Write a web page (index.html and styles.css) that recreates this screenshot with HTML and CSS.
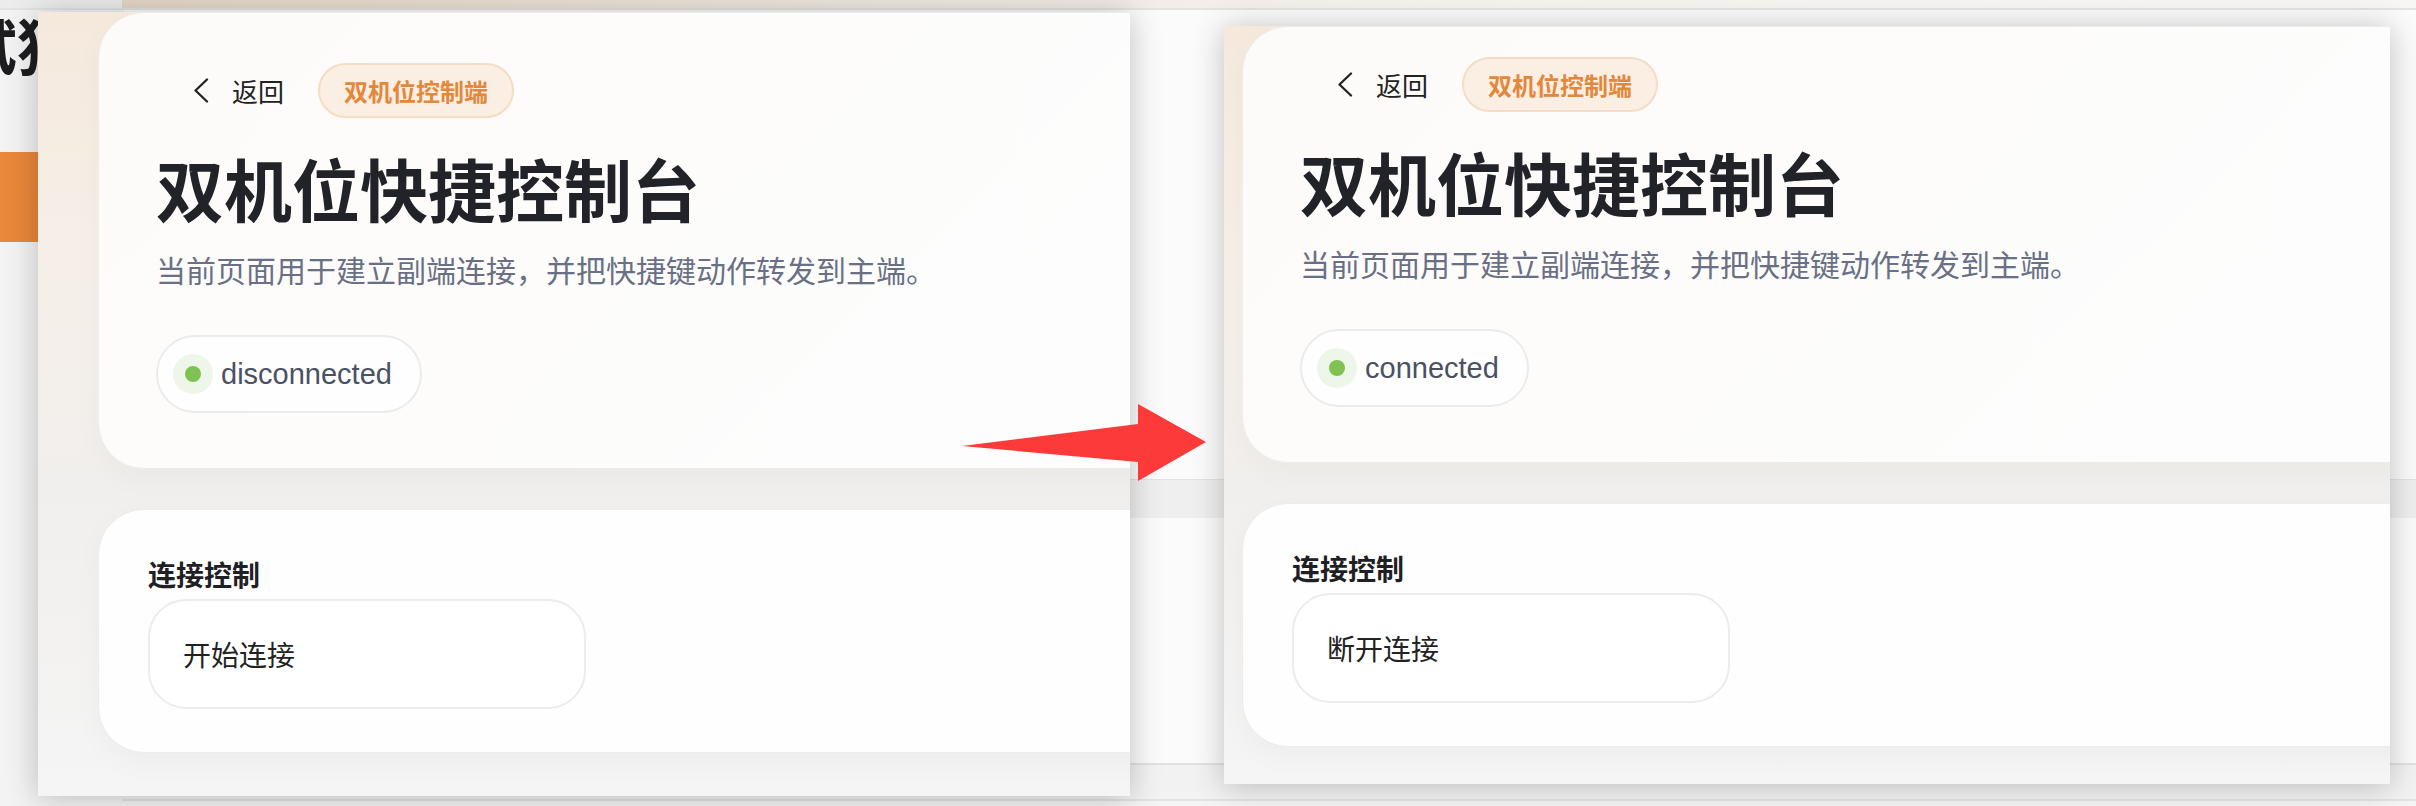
FILE: index.html
```html
<!DOCTYPE html>
<html lang="zh-CN">
<head>
<meta charset="utf-8">
<title>双机位快捷控制台</title>
<link rel="stylesheet" href="styles.css">
</head>
<body>
<div class="desk">
  <div class="bg-app">
    <div class="bg-top"><div class="bg-top-side"></div><div class="bg-top-main"></div></div>
    <div class="bg-body">
      <aside class="bg-side">
        <div class="bg-title">试猜</div>
        <div class="bg-btn"></div>
      </aside>
      <main class="bg-main">
        <div class="bg-panel p1"></div>
        <div class="bg-band"></div>
        <div class="bg-panel p2"></div>
        <div class="bg-band b2"></div>
      </main>
    </div>
  </div>

  <section class="shot shot-left">
    <div class="page">
      <div class="card hero">
        <div class="top-row">
          <a class="back"><svg class="chev" viewBox="0 0 16 25" width="16" height="25"><polyline points="14,1.5 2.5,12.5 14,23.5" fill="none" stroke="#222" stroke-width="2.3" stroke-linecap="round" stroke-linejoin="round"/></svg><span>返回</span></a>
          <span class="tag">双机位控制端</span>
        </div>
        <h1 class="title">双机位快捷控制台</h1>
        <p class="sub">当前页面用于建立副端连接，并把快捷键动作转发到主端。</p>
        <div class="status"><span class="halo"><span class="dot"></span></span><span class="status-text">disconnected</span></div>
      </div>
      <div class="card ctrl">
        <div class="ctrl-label">连接控制</div>
        <button class="ctrl-btn">开始连接</button>
      </div>
    </div>
  </section>

  <section class="shot shot-right">
    <div class="page">
      <div class="card hero">
        <div class="top-row">
          <a class="back"><svg class="chev" viewBox="0 0 16 25" width="16" height="25"><polyline points="14,1.5 2.5,12.5 14,23.5" fill="none" stroke="#222" stroke-width="2.3" stroke-linecap="round" stroke-linejoin="round"/></svg><span>返回</span></a>
          <span class="tag">双机位控制端</span>
        </div>
        <h1 class="title">双机位快捷控制台</h1>
        <p class="sub">当前页面用于建立副端连接，并把快捷键动作转发到主端。</p>
        <div class="status"><span class="halo"><span class="dot"></span></span><span class="status-text">connected</span></div>
      </div>
      <div class="card ctrl">
        <div class="ctrl-label">连接控制</div>
        <button class="ctrl-btn">断开连接</button>
      </div>
    </div>
  </section>

  <svg class="arrow" viewBox="0 0 270 100" width="270" height="100"><polygon points="12,51 188,29 188,9 256,47 188,86 188,67" fill="#fc3a3a"/></svg>
</div>
</body>
</html>
```

FILE: styles.css
```css
* { box-sizing: border-box; margin: 0; padding: 0; }
html, body { width: 2416px; height: 806px; overflow: hidden; }
body {
  background: #f4f4f4;
  font-family: "Noto Sans CJK SC", "Liberation Sans", sans-serif;
  color: #222;
}
.desk { position: relative; width: 2416px; height: 806px; }

/* background application */
.bg-app { display: flex; flex-direction: column; height: 100%; }
.bg-top { height: 10px; display: flex; border-bottom: 2px solid #e3e3e3; }
.bg-top-side { width: 122px; background: #ececec; }
.bg-top-main { flex: 1; background: linear-gradient(90deg, #e5d7c6 0%, #efe7de 30%, #f6f3ef 60%, #f8f6f3 100%); }
.bg-body { flex: 1; display: flex; }
.bg-side { width: 122px; background: #f3f3f3; display: flex; flex-direction: column; overflow: hidden; }
.bg-title {
  font-size: 60px; font-weight: 700; line-height: 66px;
  margin: 1px 0 0 -43px; white-space: nowrap; color: #1d1d1f;
}
.bg-btn { margin-top: 75px; height: 90px; background: #e9883a; border-radius: 0 14px 14px 0; }
.bg-main { flex: 1; display: flex; flex-direction: column; }
.bg-panel { background: #fbfbfb; border-left: 1px solid #e6e6e6; }
.bg-panel.p1 { height: 469px; }
.bg-band { height: 39px; background: #efefef; border-top: 1px solid #e3e3e3; }
.bg-panel.p2 { height: 245px; }
.bg-band.b2 { height: 38px; background: #f2f2f2; border-top: 2px solid #e2e2e2; border-bottom: 2px solid #e2e2e2; }

/* screenshot windows */
.shot {
  position: absolute;
  overflow: hidden;
  box-shadow: 0 2px 30px rgba(0, 0, 0, 0.24);
}
.shot-left { left: 38px; top: 12px; width: 1092px; height: 784px; }
.shot-right { left: 1224px; top: 26px; width: 1166px; height: 758px; }

.page {
  height: 100%;
  display: flex;
  flex-direction: column;
  gap: 40px;
  background: linear-gradient(180deg, #f5e9dc 0%, #f6efe8 30%, #f1efed 60%, #f5f5f5 100%);
}
.shot-left .page { padding-left: 60px; }
.shot-right .page { padding-left: 18px; }

.card {
  border: 1px solid #eeecea;
  border-radius: 46px;
  margin-right: -90px;
  box-shadow: 0 10px 30px rgba(0, 0, 0, 0.03);
}

.hero {
  background: linear-gradient(135deg, #fdfbf9 0%, #fdfcfb 35%, #fdfdfd 100%);
  padding: 50px 0 55px 57px;
  display: flex;
  flex-direction: column;
  align-items: flex-start;
}
.shot-right .hero { padding-top: 30px; }

.top-row { display: flex; align-items: center; height: 55px; }
.back {
  display: flex; align-items: center; gap: 23px;
  padding: 0 34px 0 37px;
  font-size: 26px; line-height: 1; color: #222;
}
.chev { display: block; }
.tag {
  display: inline-flex; align-items: center; justify-content: center;
  height: 55px; padding: 0 24px;
  background: #fbeee2; border: 2px solid #f4dcc5; border-radius: 28px;
  font-size: 24px; font-weight: 700; color: #e2873b;
}

.title {
  margin-top: 29px;
  font-size: 68px; line-height: 82px; font-weight: 700;
  color: #222328; white-space: nowrap;
}
.sub {
  margin-top: 18px;
  font-size: 30px; line-height: 45px; color: #697085; white-space: nowrap;
}

.status {
  margin-top: 43px;
  display: flex; align-items: center;
  height: 78px;
  padding: 0 28px 0 15px;
  border: 2px solid #ebebeb; border-radius: 40px;
  background: #fefefe;
}
.halo {
  width: 40px; height: 40px; border-radius: 50%;
  background: #eef6e9;
  display: flex; align-items: center; justify-content: center;
}
.dot { width: 16px; height: 16px; border-radius: 50%; background: #7fc152; }
.status-text {
  margin-left: 8px;
  font-family: "Liberation Sans", "Noto Sans CJK SC", sans-serif;
  font-size: 29px; line-height: 1; color: #4a5163;
}

.ctrl {
  background: #fefefe;
  padding: 46px 0 43px 49px;
  display: flex; flex-direction: column; align-items: flex-start;
}
.ctrl-label { font-size: 28px; line-height: 36px; font-weight: 700; color: #1f2024; }
.ctrl-btn {
  margin-top: 7px;
  width: 438px; height: 110px;
  padding: 0 0 0 33px;
  text-align: left;
  background: #fff;
  border: 2px solid #ececec; border-radius: 38px;
  font-family: "Noto Sans CJK SC", sans-serif;
  font-size: 28px; color: #222;
}

.arrow { position: absolute; left: 950px; top: 395px; }
```
